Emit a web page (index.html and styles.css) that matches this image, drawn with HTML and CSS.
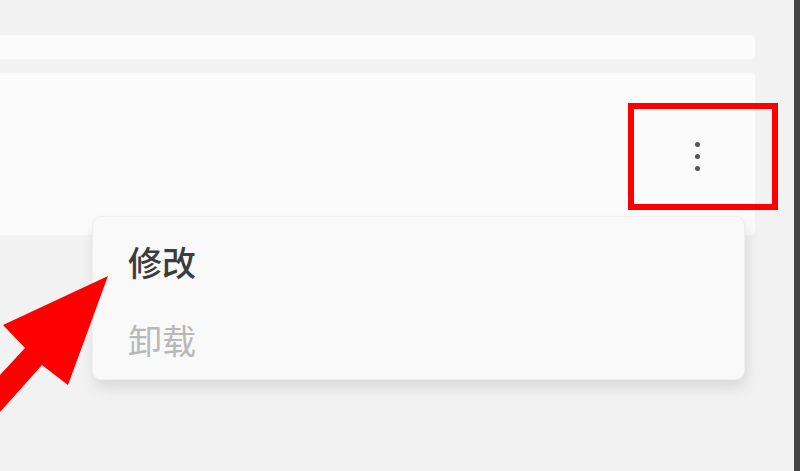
FILE: index.html
```html
<!DOCTYPE html>
<html lang="zh-CN">
<head>
	<meta charset="UTF-8">
	<title>应用</title>
	<link rel="stylesheet" href="styles.css">
</head>
<body>
	<div class="window">
		<div class="main">
			<div class="card strip"></div>
			<div class="card app">
				<button class="more" type="button">
					<span></span><span></span><span></span>
				</button>
			</div>
		</div>
		<div class="scrollbar"></div>
	</div>

	<!-- context menu -->
	<div class="menu">
		<div class="menu-item">修改</div>
		<div class="menu-item disabled">卸载</div>
	</div>

	<!-- annotations -->
	<div class="mark"></div>
	<svg class="arrow" width="115" height="150" viewBox="0 270 115 150">
		<polygon points="108,276 68,385 42,365 0,412 0,375 25,348 3,325" fill="#ff0000"/>
	</svg>
</body>
</html>
```

FILE: styles.css
```css
* {
	box-sizing: border-box;
}

html, body {
	margin: 0;
	height: 100%;
	background: #f2f2f2;
	font-family: "Noto Sans CJK SC", "Noto Sans", sans-serif;
	overflow: hidden;
}

.window {
	display: flex;
	height: 100%;
}

/********** cards ***************/
.main {
	flex: 1;
	display: flex;
	flex-direction: column;
	gap: 14px;
	padding: 35px 39px 0 0;
}
.card {
	background: #fbfbfb;
	border-radius: 0 4px 4px 0;
}
.strip {
	height: 24px;
}
.app {
	height: 162px;
	display: flex;
	align-items: center;
	justify-content: flex-end;
	padding-right: 44px;
}
.more {
	display: flex;
	flex-direction: column;
	align-items: center;
	gap: 7px;
	width: 28px;
	padding: 0;
	margin-top: 4px;
	border: 0;
	background: none;
}
.more span {
	width: 5px;
	height: 5px;
	border-radius: 50%;
	background: #555;
}

.scrollbar {
	width: 6px;
	background: #454545;
}

/********** menu ***************/
.menu {
	position: absolute;
	left: 92px;
	top: 216px;
	width: 653px;
	height: 164px;
	padding: 5px 0;
	background: #f9f9f9;
	border: 1px solid #efefef;
	border-radius: 9px;
	box-shadow: 2px 8px 14px rgba(0, 0, 0, 0.1);
}
.menu-item {
	height: 78px;
	display: flex;
	align-items: center;
	padding-left: 35px;
	font-size: 34px;
	font-weight: 500;
	color: #3c3c3c;
}
.menu-item.disabled {
	font-weight: 400;
	color: #b8b8b8;
}

/********** annotations ***************/
.mark {
	position: absolute;
	left: 628px;
	top: 103px;
	width: 150px;
	height: 107px;
	border: 6px solid #ff0000;
}
.arrow {
	position: absolute;
	left: 0;
	top: 270px;
}
```
